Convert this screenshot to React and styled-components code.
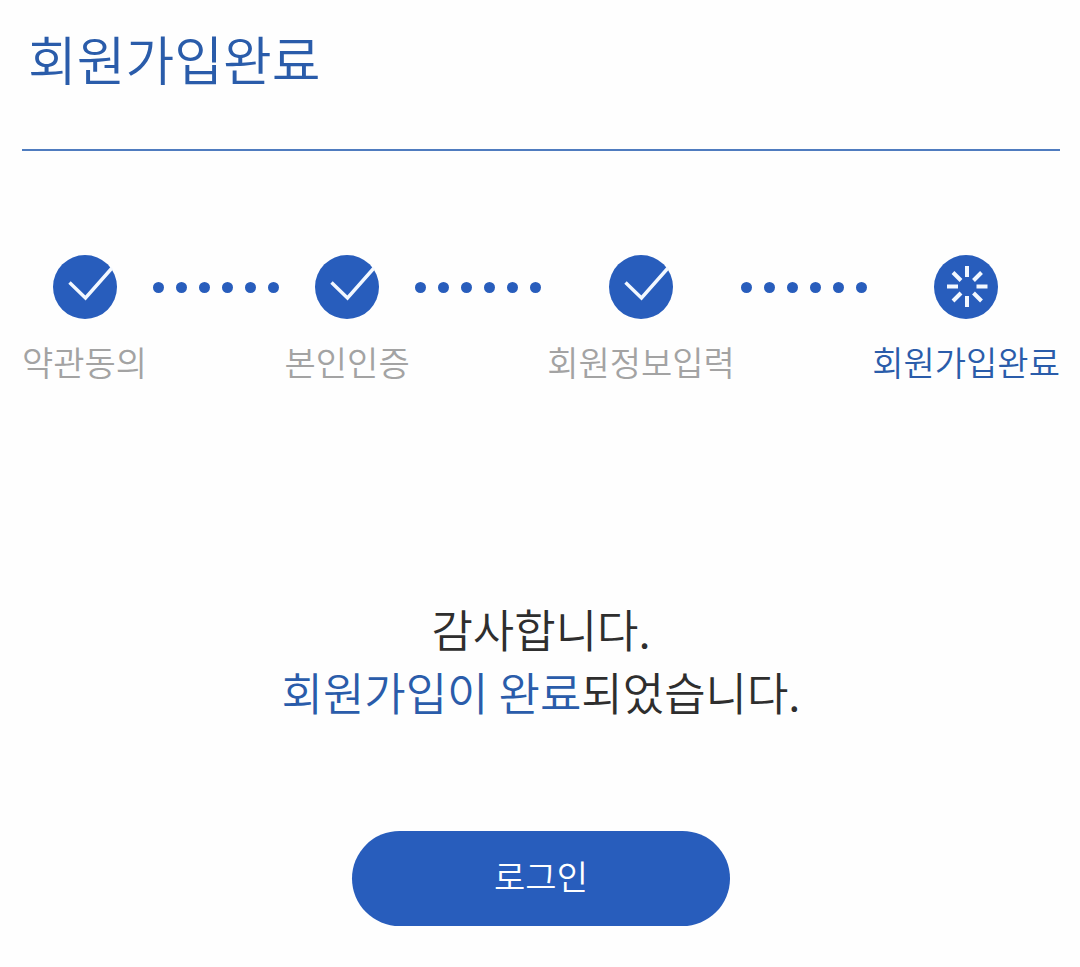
import React from 'react';
import styled, { createGlobalStyle } from 'styled-components';

const GlobalStyle = createGlobalStyle`
  *, *::before, *::after { box-sizing: border-box; }
  body {
    margin: 0;
    background: #fefefe;
    color: #2e2e2e;
    font-family: "Noto Sans CJK KR", "Noto Sans", sans-serif;
    font-weight: 350;
  }
`;

const Page = styled.main`
  padding: 20px 20px 40px 22px;
`;

const Header = styled.header`
  padding: 0 8px 52px 6px;
  border-bottom: 2px solid #4f7cbf;
`;

const Title = styled.h1`
  margin: 0;
  color: #2a5caa;
  font-size: 53px;
  line-height: 77px;
  font-weight: 350;
`;

const Steps = styled.ol`
  display: flex;
  justify-content: space-between;
  margin: 104px 0 0;
  padding: 0;
  list-style: none;
`;

const Step = styled.li`
  display: flex;
  flex-direction: column;
  align-items: center;
  gap: 18px;
  color: ${({ $current }) => ($current ? '#2a5caa' : '#a3a3a3')};
  font-size: 34px;
  line-height: 50px;
  white-space: nowrap;
`;

const StepIcon = styled.svg`
  display: block;
  width: 64px;
  height: 64px;
`;

const Connector = styled.li`
  display: flex;
  align-items: center;
  gap: 12px;
  height: 64px;
`;

const Dot = styled.span`
  width: 11px;
  height: 11px;
  border-radius: 50%;
  background: #285dbc;
`;

const Message = styled.p`
  margin: 210px 0 0;
  font-size: 45px;
  line-height: 63px;
  text-align: center;
`;

const Highlight = styled.strong`
  color: #2a5caa;
  font-weight: 350;
`;

const Actions = styled.div`
  display: flex;
  justify-content: center;
  margin-top: 108px;
`;

const LoginButton = styled.button`
  min-width: 378px;
  padding: 20px 40px 25px;
  border: 0;
  border-radius: 48px;
  background: #285dbc;
  color: #fff;
  font: inherit;
  font-size: 34px;
  line-height: 50px;
  cursor: pointer;
`;

const steps = ['약관동의', '본인인증', '회원정보입력', '회원가입완료'];

function CheckIcon() {
  return (
    <StepIcon viewBox="0 0 64 64" aria-hidden="true">
      <circle cx="32" cy="32" r="32" fill="#285dbc" />
      <path d="M16.5 27.5 32.5 43 59 13" fill="none" stroke="#f3f8ff" strokeWidth="3.4" />
    </StepIcon>
  );
}

function ProgressIcon() {
  return (
    <StepIcon viewBox="0 0 64 64" aria-hidden="true">
      <circle cx="32" cy="32" r="32" fill="#285dbc" />
      <path
        d="M33 11v11M33 41v11M13 31.5h11M42.5 31.5h11M19 17.5l8 8M39.5 38l8 8M47.5 17.5l-8 8M27 38l-8 8"
        fill="none"
        stroke="#f3f8ff"
        strokeWidth="4"
      />
    </StepIcon>
  );
}

function Dots() {
  return (
    <Connector aria-hidden="true">
      {Array.from({ length: 6 }, (_, i) => (
        <Dot key={i} />
      ))}
    </Connector>
  );
}

export default function App() {
  const current = steps.length - 1;
  return (
    <>
      <GlobalStyle />
      <Page>
        <Header>
          <Title>회원가입완료</Title>
        </Header>
        <Steps>
          {steps.map((label, i) => (
            <React.Fragment key={label}>
              {i > 0 && <Dots />}
              <Step $current={i === current} aria-current={i === current ? 'step' : undefined}>
                {i === current ? <ProgressIcon /> : <CheckIcon />}
                <span>{label}</span>
              </Step>
            </React.Fragment>
          ))}
        </Steps>
        <Message>
          감사합니다.
          <br />
          <Highlight>회원가입이 완료</Highlight>되었습니다.
        </Message>
        <Actions>
          <LoginButton type="button">로그인</LoginButton>
        </Actions>
      </Page>
    </>
  );
}
